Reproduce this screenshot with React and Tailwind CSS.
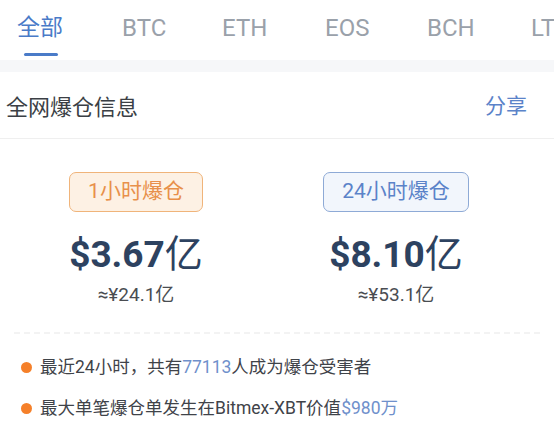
export default function App() {
  const font = { fontFamily: "Roboto, 'Noto Sans CJK SC', sans-serif" };
  const tabs = [
    ["BTC", "w-[100px]"],
    ["ETH", "w-[103px]"],
    ["EOS", "w-[102px]"],
    ["BCH", "w-[104px]"],
    ["LTC", "w-[60px]"],
  ];
  return (
    <div className="w-[554px] h-[427px] bg-white overflow-hidden" style={font}>
      {/* tabs */}
      <div className="h-[60px] flex items-start pl-[17px] whitespace-nowrap overflow-hidden">
        <div className="w-[105px] shrink-0 flex flex-col items-start pt-[11px]">
          <span className="text-[23px] leading-[34px] text-[#4a7bc8]">全部</span>
          <span className="ml-[7px] mt-[8px] w-[34px] h-[3px] rounded-full bg-[#4a7bc8]"></span>
        </div>
        {tabs.map(([t, w]) => (
          <div key={t} className={`${w} shrink-0 pt-[11px]`}>
            <span className="text-[24px] leading-[34px] text-[#9aa1aa]">{t}</span>
          </div>
        ))}
      </div>
      <div className="h-[12px] bg-[#f6f7f9]"></div>
      {/* header */}
      <div className="h-[67px] flex items-center justify-between pl-[6px] pr-[27px] border-b border-[#efefef]">
        <span className="text-[22px] text-[#3b3f45] mt-[4px]">全网爆仓信息</span>
        <span className="text-[21px] text-[#5b83c9] mt-[4px]">分享</span>
      </div>
      {/* stats */}
      <div className="flex pl-[6px] pt-[33px] h-[193px]">
        <div className="w-[260px] flex flex-col items-center">
          <div className="w-[134px] h-[40px] rounded-[7px] border border-[#f0b47a] bg-[#fdf1e4] flex items-center justify-center text-[21px] text-[#e8904a]">
            1小时爆仓
          </div>
          <div className="mt-[22px] text-[#2d4260] leading-[40px] flex items-baseline">
            <span className="text-[37px] font-bold">$3.67</span>
            <span className="text-[38px] font-normal">亿</span>
          </div>
          <div className="mt-[6px] text-[19px] text-[#4a4d52]">≈¥24.1亿</div>
        </div>
        <div className="w-[260px] flex flex-col items-center">
          <div className="w-[146px] h-[40px] rounded-[7px] border border-[#8eaad6] bg-[#f2f6fc] flex items-center justify-center text-[21px] text-[#5b83c9]">
            24小时爆仓
          </div>
          <div className="mt-[22px] text-[#2d4260] leading-[40px] flex items-baseline">
            <span className="text-[37px] font-bold">$8.10</span>
            <span className="text-[38px] font-normal">亿</span>
          </div>
          <div className="mt-[6px] text-[19px] text-[#4a4d52]">≈¥53.1亿</div>
        </div>
      </div>
      {/* dashed separator */}
      <div className="mx-[14px] border-t-2 border-dashed border-[#f3f3f3]"></div>
      {/* bullets */}
      <div className="pt-[20px] flex flex-col gap-[15px] pl-[21px]">
        <div className="flex items-center gap-[8px] h-[26px]">
          <span className="w-[11px] h-[11px] rounded-full bg-[#f5802a]"></span>
          <span className="text-[17.5px] text-[#3f4349]">
            最近24小时，共有<span className="text-[#6f90cb]">77113</span>人成为爆仓受害者
          </span>
        </div>
        <div className="flex items-center gap-[8px] h-[26px]">
          <span className="w-[11px] h-[11px] rounded-full bg-[#f5802a]"></span>
          <span className="text-[17.5px] text-[#3f4349]">
            最大单笔爆仓单发生在Bitmex-XBT价值<span className="text-[#6f90cb]">$980万</span>
          </span>
        </div>
      </div>
    </div>
  );
}
